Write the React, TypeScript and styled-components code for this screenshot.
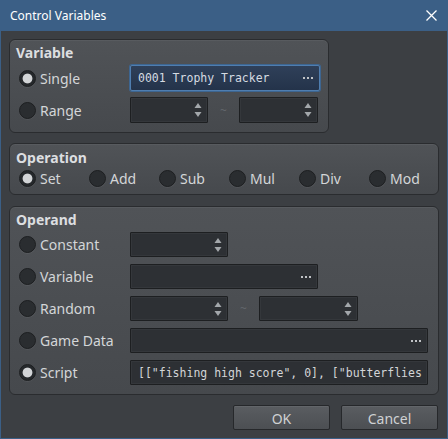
import React from "react";
import styled, { createGlobalStyle } from "styled-components";

const Global = createGlobalStyle`
  html, body { margin: 0; padding: 0; background: #3d4044; }
  body { font-family: "Noto Sans", "Open Sans", sans-serif; }
  * { box-sizing: border-box; }
`;

const Window = styled.div`
  width: 448px;
  height: 439px;
  display: flex;
  flex-direction: column;
  background: #3c3f43;
  border: 1px solid #3b5f86;
  border-top: none;
`;

const TitleBar = styled.div`
  height: 31px;
  margin: 0 -1px;
  background: #3b5f86;
  display: flex;
  align-items: center;
  justify-content: space-between;
  padding: 0 10px;
  color: #ffffff;
  font-size: 12px;
`;

const Close = styled.svg`
  width: 11px;
  height: 11px;
  margin-right: 1px;
`;

const Body = styled.div`
  flex: 1;
  display: flex;
  flex-direction: column;
  padding: 8px 8px 0 8px;
`;

const Group = styled.div<{ $w?: number; $pt: number; $pb: number; $mb: number }>`
  width: ${(p) => (p.$w ? `${p.$w}px` : "100%")};
  border: 1px solid #2a2c2f;
  border-radius: 6px;
  background: linear-gradient(#505357, #46494d);
  box-shadow: inset 0 1px 0 rgba(255, 255, 255, 0.05);
  padding: ${(p) => p.$pt}px 9px ${(p) => p.$pb}px 9px;
  margin-bottom: ${(p) => p.$mb}px;
  display: flex;
  flex-direction: column;
`;

const GroupTitle = styled.div<{ $mb: number }>`
  font-weight: bold;
  font-size: 14px;
  line-height: 19px;
  color: #dcdee0;
  margin-left: -3px;
  margin-bottom: ${(p) => p.$mb}px;
`;

const Rows = styled.div<{ $gap: number }>`
  display: flex;
  flex-direction: column;
  gap: ${(p) => p.$gap}px;
`;

const Row = styled.div<{ $h: number }>`
  height: ${(p) => p.$h}px;
  display: grid;
  grid-template-columns: 111px auto;
  align-items: center;
`;

const FieldLine = styled.div`
  display: flex;
  align-items: center;
  height: 100%;
`;

const Option = styled.label<{ $w?: number }>`
  display: flex;
  align-items: center;
  gap: 4px;
  width: ${(p) => (p.$w ? `${p.$w}px` : "auto")};
  font-size: 14px;
  line-height: 18px;
  color: #d4d6d8;
  & > span:last-child {
    padding-top: 1px;
  }
`;

const Dot = styled.span<{ $on?: boolean }>`
  width: 17px;
  height: 17px;
  border-radius: 50%;
  border: 1px solid #1c1e20;
  background: ${(p) =>
    p.$on
      ? "radial-gradient(circle, #d2d4d6 0 4.3px, #bfc1c3 4.6px, #25282b 5.3px)"
      : "#2a2d30"};
  box-shadow: 0 1px 0 rgba(255, 255, 255, 0.06);
  flex: none;
`;

const OpRow = styled.div`
  height: 20px;
  display: grid;
  grid-template-columns: repeat(6, 70px);
  align-items: center;
`;

const Input = styled.div<{ $w: number; $h: number; $focus?: boolean }>`
  position: relative;
  width: ${(p) => p.$w}px;
  height: ${(p) => p.$h}px;
  border: 1px solid ${(p) => (p.$focus ? "#4f7eb0" : "#1d1f21")};
  box-shadow: ${(p) =>
    p.$focus ? "0 0 0 1px #3d6590" : "inset 0 0 0 1px #34373b"};
  border-radius: ${(p) => (p.$focus ? "2px" : "1px")};
  background: ${(p) =>
    p.$focus ? "linear-gradient(#2f4059, #24334a)" : "#2d3034"};
  display: flex;
  align-items: center;
  padding: 0 7px;
  font-family: "DejaVu Sans Mono", "Liberation Mono", monospace;
  font-size: 11.5px;
  color: ${(p) => (p.$focus ? "#d6dbe2" : "#d3d5d7")};
  white-space: nowrap;
  overflow: hidden;
`;

const Ellipsis = styled.span`
  position: absolute;
  right: 6px;
  top: 50%;
  transform: translateY(-50%);
  display: flex;
  gap: 2px;
  & > i {
    width: 2px;
    height: 2px;
    background: #c0c3c6;
  }
`;

const Spin = styled.svg`
  position: absolute;
  right: 5px;
  top: 50%;
  transform: translateY(-50%);
  width: 8px;
  height: 16px;
`;

const Tilde = styled.span<{ $w: number }>`
  width: ${(p) => p.$w}px;
  text-align: center;
  color: #63676c;
  font-size: 12px;
`;

const Buttons = styled.div`
  display: flex;
  justify-content: flex-end;
  gap: 11px;
  padding-right: 1px;
`;

const Button = styled.div`
  width: 97px;
  height: 25px;
  border: 1px solid #26282b;
  border-radius: 2px;
  background: linear-gradient(#5a5d61, #4c4f53);
  box-shadow: inset 0 1px 0 rgba(255, 255, 255, 0.06);
  display: flex;
  align-items: center;
  justify-content: center;
  color: #cfd1d3;
  font-size: 14px;
  padding-top: 1px;
`;

const Dots = () => (
  <Ellipsis>
    <i />
    <i />
    <i />
  </Ellipsis>
);

const Arrows = () => (
  <Spin viewBox="0 0 8 16">
    <path d="M4 1 L7.5 6 L0.5 6 Z" fill="#a3a7ab" />
    <path d="M0.5 10 L7.5 10 L4 15 Z" fill="#a3a7ab" />
  </Spin>
);

const Field = ({
  w,
  h,
  spin,
  dots,
  focus,
  children,
}: {
  w: number;
  h: number;
  spin?: boolean;
  dots?: boolean;
  focus?: boolean;
  children?: React.ReactNode;
}) => (
  <Input $w={w} $h={h} $focus={focus}>
    {children}
    {spin && <Arrows />}
    {dots && <Dots />}
  </Input>
);

const Choice = ({ label, on, w }: { label: string; on?: boolean; w?: number }) => (
  <Option $w={w}>
    <Dot $on={on} />
    <span>{label}</span>
  </Option>
);

const ops = ["Set", "Add", "Sub", "Mul", "Div", "Mod"];

export default function App() {
  return (
    <>
      <Global />
      <Window>
        <TitleBar>
          <span>Control Variables</span>
          <Close viewBox="0 0 11 11">
            <path d="M0.5 0.5 L10.5 10.5 M10.5 0.5 L0.5 10.5" stroke="#fff" strokeWidth="1.3" />
          </Close>
        </TitleBar>
        <Body>
          <Group $w={320} $pt={3} $pb={9} $mb={10}>
            <GroupTitle $mb={3}>Variable</GroupTitle>
            <Rows $gap={6}>
              <Row $h={26}>
                <Choice label="Single" on />
                <Field w={190} h={26} focus dots>
                  0001 Trophy Tracker
                </Field>
              </Row>
              <Row $h={26}>
                <Choice label="Range" />
                <FieldLine>
                  <Field w={78} h={26} spin />
                  <Tilde $w={31}>~</Tilde>
                  <Field w={79} h={26} spin />
                </FieldLine>
              </Row>
            </Rows>
          </Group>

          <Group $pt={4} $pb={6} $mb={11}>
            <GroupTitle $mb={1}>Operation</GroupTitle>
            <OpRow>
              {ops.map((o, i) => (
                <Choice key={o} label={o} on={i === 0} />
              ))}
            </OpRow>
          </Group>

          <Group $pt={3} $pb={9} $mb={10}>
            <GroupTitle $mb={3}>Operand</GroupTitle>
            <Rows $gap={7}>
              <Row $h={25}>
                <Choice label="Constant" />
                <Field w={98} h={25} spin />
              </Row>
              <Row $h={25}>
                <Choice label="Variable" />
                <Field w={188} h={25} dots />
              </Row>
              <Row $h={25}>
                <Choice label="Random" />
                <FieldLine>
                  <Field w={98} h={25} spin />
                  <Tilde $w={31}>~</Tilde>
                  <Field w={99} h={25} spin />
                </FieldLine>
              </Row>
              <Row $h={25}>
                <Choice label="Game Data" />
                <Field w={298} h={25} dots />
              </Row>
              <Row $h={25}>
                <Choice label="Script" on />
                <Field w={298} h={25}>
                  [["fishing high score", 0], ["butterflies
                </Field>
              </Row>
            </Rows>
          </Group>

          <Buttons>
            <Button>OK</Button>
            <Button>Cancel</Button>
          </Buttons>
        </Body>
      </Window>
    </>
  );
}
